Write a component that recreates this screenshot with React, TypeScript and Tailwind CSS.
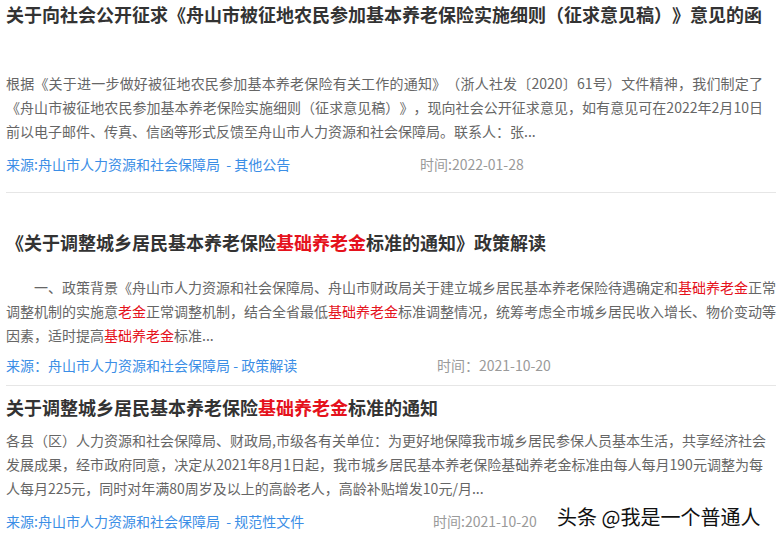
const FONT = "font-['Noto_Sans_CJK_SC','Microsoft_YaHei',sans-serif]";

function Red({ children }: { children: React.ReactNode }) {
  return <span className="text-[#e5121c]">{children}</span>;
}

function Line({ children, full = true, className = '' }: { children: React.ReactNode; full?: boolean; className?: string }) {
  return (
    <span className={`block whitespace-nowrap ${full ? '[text-align-last:justify]' : ''} ${className}`}>
      {children}
    </span>
  );
}

function SourceRow({ source, time, width }: { source: string; time: string; width: string }) {
  return (
    <div className="flex text-[14px] leading-[24px]">
      <span className={`${width} text-[#3b8ee6] whitespace-pre`}>{source}</span>
      <span className="text-[#9a9a9a]">{time}</span>
    </div>
  );
}

export default function App() {
  return (
    <div className={`relative w-[776px] h-[543px] overflow-hidden bg-white [text-spacing-trim:space-all] ${FONT}`}>
      {/* item 1 */}
      <div className="ml-[6px] pb-[16px] border-b border-[#e6e6e6]">
        <h3 className="text-[18px] font-bold leading-[28px] text-[#333] whitespace-nowrap">
          关于向社会公开征求《舟山市被征地农民参加基本养老保险实施细则（征求意见稿）》意见的函
        </h3>
        <div className="mt-[43px] w-[757px] text-[14px] leading-[24px] text-[#666]">
          <Line>根据《关于进一步做好被征地农民参加基本养老保险有关工作的通知》（浙人社发〔2020〕61号）文件精神，我们制定了</Line>
          <Line>《舟山市被征地农民参加基本养老保险实施细则（征求意见稿）》，现向社会公开征求意见，如有意见可在2022年2月10日</Line>
          <Line full={false}>前以电子邮件、传真、信函等形式反馈至舟山市人力资源和社会保障局。联系人：张...</Line>
        </div>
        <div className="mt-[9px]">
          <SourceRow source="来源:舟山市人力资源和社会保障局  - 其他公告" time="时间:2022-01-28" width="w-[414px]" />
        </div>
      </div>

      {/* item 2 */}
      <div className="ml-[6px] pt-[35px] pb-[8px] border-b border-[#e6e6e6]">
        <h3 className="text-[18px] font-bold leading-[28px] text-[#333] whitespace-nowrap">
          《关于调整城乡居民基本养老保险<Red>基础养老金</Red>标准的通知》政策解读
        </h3>
        <div className="mt-[19px] w-[769px] text-[14px] leading-[24px] text-[#666]">
          <Line className="pl-[28px]">
            一、政策背景《舟山市人力资源和社会保障局、舟山市财政局关于建立城乡居民基本养老保险待遇确定和<Red>基础养老金</Red>正常
          </Line>
          <Line>
            调整机制的实施意<Red>老金</Red>正常调整机制，结合全省最低<Red>基础养老金</Red>标准调整情况，统筹考虑全市城乡居民收入增长、物价变动等
          </Line>
          <Line full={false}>
            因素，适时提高<Red>基础养老金</Red>标准...
          </Line>
        </div>
        <div className="mt-[6px]">
          <SourceRow source="来源：舟山市人力资源和社会保障局 - 政策解读" time="时间：2021-10-20" width="w-[431px]" />
        </div>
      </div>

      {/* item 3 */}
      <div className="ml-[6px] pt-[7px]">
        <h3 className="text-[18px] font-bold leading-[28px] text-[#333] whitespace-nowrap">
          关于调整城乡居民基本养老保险<Red>基础养老金</Red>标准的通知
        </h3>
        <div className="mt-[7px] w-[757px] text-[14px] leading-[24px] text-[#666]">
          <Line>各县（区）人力资源和社会保障局、财政局,市级各有关单位：为更好地保障我市城乡居民参保人员基本生活，共享经济社会</Line>
          <Line>发展成果，经市政府同意，决定从2021年8月1日起，我市城乡居民基本养老保险基础养老金标准由每人每月190元调整为每</Line>
          <Line full={false}>人每月225元，同时对年满80周岁及以上的高龄老人，高龄补贴增发10元/月...</Line>
        </div>
        <div className="mt-[9px]">
          <SourceRow source="来源:舟山市人力资源和社会保障局  - 规范性文件" time="时间:2021-10-20" width="w-[427px]" />
        </div>
      </div>

      {/* watermark */}
      <div className="absolute left-[557px] top-[503px] text-[20px] leading-[28px] text-[#111] whitespace-nowrap [text-shadow:0_0_2px_#fff,0_0_2px_#fff,0_0_3px_#fff]">
        头条 @我是一个普通人
      </div>
    </div>
  );
}
